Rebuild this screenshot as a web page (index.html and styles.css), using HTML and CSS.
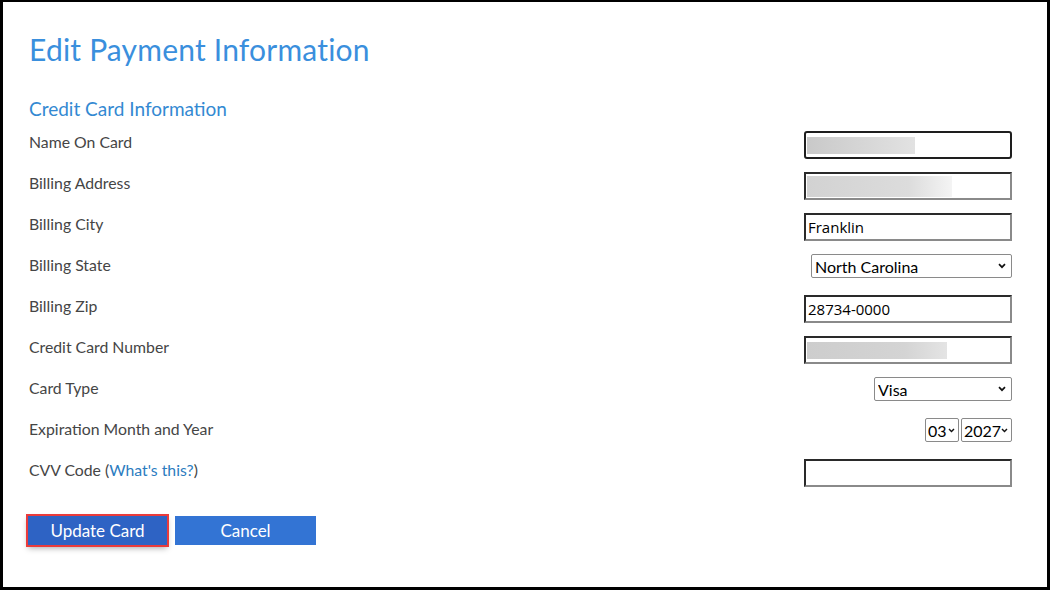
FILE: index.html
```html
<!DOCTYPE html>
<html>
<head>
<meta charset="utf-8">
<link rel="stylesheet" href="styles.css">
</head>
<body>
<div class="frame">
  <h1 class="title">Edit Payment Information</h1>
  <h2 class="subtitle">Credit Card Information</h2>
  <div class="form">
    <div class="row">
      <label class="label">Name On Card</label>
      <input class="text focus blur-name" type="text" value="">
    </div>
    <div class="row">
      <label class="label">Billing Address</label>
      <input class="text blur-addr" type="text" value="">
    </div>
    <div class="row">
      <label class="label">Billing City</label>
      <input class="text" type="text" value="Franklin">
    </div>
    <div class="row">
      <label class="label">Billing State</label>
      <select class="sel sel-state"><option>North Carolina</option></select>
    </div>
    <div class="row">
      <label class="label">Billing Zip</label>
      <input class="text" type="text" value="28734-0000">
    </div>
    <div class="row">
      <label class="label">Credit Card Number</label>
      <input class="text blur-cc" type="text" value="">
    </div>
    <div class="row">
      <label class="label">Card Type</label>
      <select class="sel sel-type"><option>Visa</option></select>
    </div>
    <div class="row">
      <label class="label">Expiration Month and Year</label>
      <div class="exp">
        <select class="sel sel-month"><option>03</option></select>
        <select class="sel sel-year"><option>2027</option></select>
      </div>
    </div>
    <div class="row">
      <label class="label">CVV Code (<a class="link" href="#">What's this?</a>)</label>
      <input class="text" type="text" value="">
    </div>
  </div>
  <div class="buttons">
    <button class="btn btn-update">Update Card</button>
    <button class="btn">Cancel</button>
  </div>
</div>
</body>
</html>
```
FILE: styles.css
```css
html, body {
  margin: 0;
  padding: 0;
  background: #fff;
}
.frame {
  box-sizing: border-box;
  width: 1050px;
  height: 590px;
  border-style: solid;
  border-color: #000;
  border-width: 2px 3px 3px 3px;
  padding: 0 35px 0 26px;
  font-family: "Lato", "Liberation Sans", sans-serif;
  background: #fff;
}
.title {
  margin: 28px 0 0 0;
  font-weight: 400;
  font-size: 30px;
  line-height: 38px;
  color: #3a8fdd;
  letter-spacing: 0.2px;
}
.subtitle {
  margin: 29px 0 0 0;
  font-weight: 400;
  font-size: 19px;
  line-height: 24px;
  color: #3389d2;
}
.form {
  margin-top: 8px;
  display: flex;
  flex-direction: column;
}
.row {
  height: 41px;
  display: flex;
  justify-content: space-between;
  align-items: flex-start;
}
.label {
  padding-top: 1px;
  font-size: 15.8px;
  line-height: 24px;
  color: #454545;
}
.link {
  color: #2b7cbf;
  text-decoration: none;
}
.text {
  box-sizing: border-box;
  margin: 2px 0 0 0;
  width: 208px;
  height: 28px;
  padding: 0 2px;
  border-style: solid;
  border-width: 2px;
  border-color: #2a2a2a #8a8a8a #8a8a8a #2a2a2a;
  font-family: "Open Sans", "Noto Sans", sans-serif;
  font-size: 15px;
  color: #000;
  background-color: #fff;
  background-repeat: no-repeat;
  outline: none;
}
.focus {
  border: 2px solid #1e1e1e;
  border-radius: 3px;
}
.blur-name {
  background-image: linear-gradient(to right, #c9c9c9, #d8d8d8 60%, #e2e2e2);
  background-size: 108px 17px;
  background-position: 1px center;
}
.blur-addr {
  background-image: linear-gradient(to right, #d2d2d2, #dcdcdc 70%, #f4f4f4);
  background-size: 145px 21px;
  background-position: 1px center;
}
.blur-cc {
  background-image: linear-gradient(to right, #cdcdcd, #d4d4d4 70%, #e4e4e4);
  background-size: 140px 17px;
  background-position: 1px center;
}
.sel {
  box-sizing: border-box;
  margin: 2px 0 0 0;
  height: 24px;
  border: 1px solid #8a8a8a;
  border-radius: 2px;
  -webkit-appearance: none;
  appearance: none;
  background-color: #fff;
  background-image: url("data:image/svg+xml;utf8,<svg xmlns='http://www.w3.org/2000/svg' width='8' height='6' viewBox='0 0 8 6'><path d='M1 1.2 L4 4.2 L7 1.2' fill='none' stroke='%23111' stroke-width='1.7'/></svg>");
  background-repeat: no-repeat;
  background-position: right 5px center;
  background-size: 8px 6px;
  font-family: "Lato", "Liberation Sans", sans-serif;
  font-size: 16px;
  color: #000;
  padding: 0 14px 0 3px;
  outline: none;
}
.sel-state { width: 201px; }
.sel-type { width: 138px; }
.exp {
  display: flex;
  gap: 2px;
}
.sel-month {
  width: 34px;
  padding: 0 0 0 2px;
  background-position: right 3px center;
  background-size: 7px 5px;
}
.sel-year {
  width: 51px;
  padding: 0 0 0 2px;
  background-position: right 3px center;
  background-size: 7px 5px;
}
.buttons {
  margin-top: 18px;
  display: flex;
  gap: 8px;
  margin-left: -1px;
}
.btn {
  box-sizing: border-box;
  width: 141px;
  height: 29px;
  border: none;
  margin: 0;
  padding: 0;
  background: #3374d4;
  color: #fff;
  font-family: "Lato", "Liberation Sans", sans-serif;
  font-size: 17px;
}
.btn-update {
  width: 139px;
  background: #2e63c4;
  outline: 2px solid #ea3b3b;
  outline-offset: 0;
  box-shadow: 0 3px 6px rgba(0,0,0,0.35);
}
```
